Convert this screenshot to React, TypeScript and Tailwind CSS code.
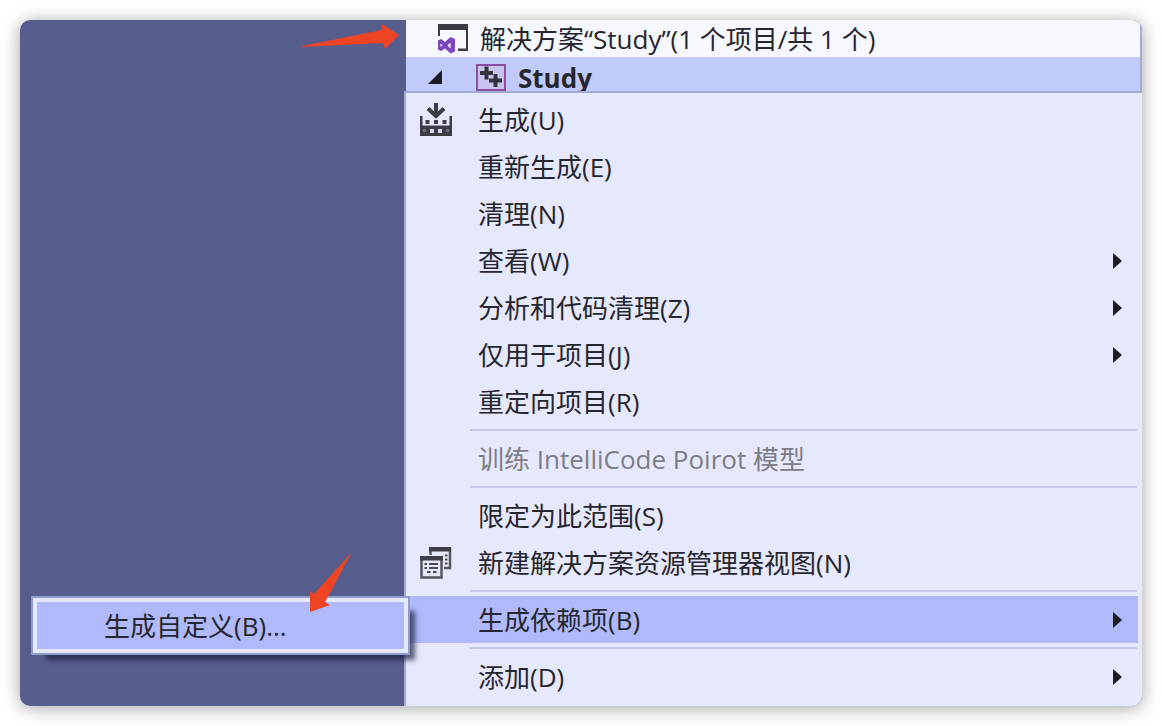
import React from "react";

type Item = {
  label: string;
  icon?: React.ReactNode;
  submenu?: boolean;
  disabled?: boolean;
  active?: boolean;
};

function BuildIcon() {
  return (
    <svg width="32" height="34" viewBox="0 0 32 34" aria-hidden="true">
      <path d="M16 0v13M8 5.500l8 7.500 8-7.500" fill="none" stroke="#3c3c44" strokeWidth="4" />
      <path d="M0 13h2.500v9.500h27V13H32v20H0z" fill="#3c3c44" />
      <path d="M5.500 17h4v4h-4zM14 17h4v4h-4zM22.500 17h4v4h-4z" fill="#3c3c44" />
      <path d="M10 26h4v4h-4zM18 26h4v4h-4z" fill="#d5d7ee" />
      <path d="M3 26h3v3H3zM26 26h3v3h-3z" fill="#6a6b78" />
    </svg>
  );
}

function ViewIcon() {
  return (
    <svg width="32" height="32" viewBox="0 0 32 32" aria-hidden="true">
      <path d="M10.500 8V1.500H30V21h-6" fill="none" stroke="#55555d" strokeWidth="2.500" />
      <path d="M9 0h22v4.500H9z" fill="#3f3f47" />
      <path d="M1.500 11h20v19.500h-20z" fill="#e6e8fd" stroke="#55555d" strokeWidth="2.500" />
      <path d="M0 9h23v4.500H0z" fill="#3f3f47" />
      <path
        d="M4.500 17h2.500M9 17h9M4.500 21h2.500M9 21h9M7 25h3.500M13 25h3.500M25 8.500h2.500M25 12.500h2.500M25 16.500h2.500"
        stroke="#4a4a52"
        strokeWidth="2"
      />
    </svg>
  );
}

function SolutionIcon() {
  return (
    <svg width="30" height="30" viewBox="0 0 30 30" aria-hidden="true">
      <path d="M0 0h30v27H20v-2.500h8V6H2v6H0z" fill="#3b3b43" />
      <path
        fillRule="evenodd"
        d="M12.500 13l4.500 2v12.500l-4.500 2L7 24.500 3 27l-3-1.500v-9L3 15l4 3zM12.500 18.500L9.500 21.500l3 3zM2.500 19.500v3.500l2-1.800z"
        fill="#7b45bd"
      />
    </svg>
  );
}

function ProjectIcon() {
  return (
    <svg width="30" height="27" viewBox="0 0 30 27" aria-hidden="true">
      <path d="M1 1h28v25H1z" fill="#c6c3ee" stroke="#8a4f9e" strokeWidth="2" />
      <path d="M4 9h13M10.500 2.500v13M13 16.500h13M19.500 10v13" stroke="#33333b" strokeWidth="4" />
    </svg>
  );
}

const groups: Item[][] = [
  [
    { label: "生成(U)", icon: <BuildIcon /> },
    { label: "重新生成(E)" },
    { label: "清理(N)" },
    { label: "查看(W)", submenu: true },
    { label: "分析和代码清理(Z)", submenu: true },
    { label: "仅用于项目(J)", submenu: true },
    { label: "重定向项目(R)" },
  ],
  [{ label: "训练 IntelliCode Poirot 模型", disabled: true }],
  [{ label: "限定为此范围(S)" }, { label: "新建解决方案资源管理器视图(N)", icon: <ViewIcon /> }],
  [{ label: "生成依赖项(B)", submenu: true, active: true }],
  [{ label: "添加(D)", submenu: true }],
];

function Submenu() {
  return (
    <div className="absolute right-full top-0 z-10 -mr-1 w-[379px] border-2 border-[#8f9bcb] bg-[#e6e8fd] p-1 shadow-[10px_10px_5px_-5px_rgba(25,28,60,0.7)]">
      <button
        type="button"
        role="menuitem"
        className="flex h-[47px] w-full items-center bg-[#afb9fc] pl-[67px] text-left"
      >
        生成自定义(B)...
      </button>
      <svg
        className="absolute -top-[46px] right-[55px]"
        width="44"
        height="60"
        viewBox="0 0 44 60"
        aria-hidden="true"
      >
        <path d="M43 0L16 50l5 3L1 60V39l4 3L24 21z" fill="#ee4423" />
      </svg>
    </div>
  );
}

function MenuRow({ item }: { item: Item }) {
  return (
    <li role="none" className="relative pr-1">
      <button
        type="button"
        role="menuitem"
        disabled={item.disabled}
        aria-haspopup={item.submenu ? "menu" : undefined}
        className={
          "flex h-[47px] w-full items-center pr-4 text-left " +
          (item.active ? "bg-[#afb9fc] " : "") +
          (item.disabled ? "text-[#7d7d88]" : "")
        }
      >
        <span className="flex w-[72px] shrink-0 pl-[14px]">{item.icon}</span>
        <span className="flex-1 whitespace-nowrap">{item.label}</span>
        {item.submenu && (
          <svg width="10" height="16" viewBox="0 0 10 16" aria-hidden="true">
            <path d="M1 0l9 8-9 8z" fill="#1c1c22" />
          </svg>
        )}
      </button>
      {item.active && <Submenu />}
    </li>
  );
}

export default function App() {
  return (
    <main className="bg-white p-5 font-['Open_Sans','Noto_Sans_CJK_SC',sans-serif] text-[26px] leading-none text-[#26262e]">
      <div className="rounded-[10px] shadow-[0_2px_18px_rgba(0,0,0,0.36)]">
        <div className="flex overflow-hidden rounded-[10px] bg-[#575d8c]">
          <aside className="relative w-[384px] shrink-0">
            <svg
              className="absolute right-[5px] top-[3px]"
              width="98"
              height="28"
              viewBox="0 0 98 28"
              aria-hidden="true"
            >
              <path d="M1 23L81 7V1l17 11-14 14-2-6L1 24z" fill="#ee4423" />
            </svg>
          </aside>
          <div className="min-w-0 flex-1">
            <header className="ml-[2px] border-r-2 border-[#a3abdb]">
              <div className="flex h-[37px] items-center gap-3 bg-[#f6f8fe] pl-8">
                <SolutionIcon />
                <span className="whitespace-nowrap">解决方案“Study”(1 个项目/共 1 个)</span>
              </div>
              <div className="flex h-[34px] items-end bg-[#c0cafb] pl-[22px]">
                <svg className="mb-[7px]" width="14" height="14" viewBox="0 0 14 14" aria-hidden="true">
                  <path d="M14 0v14H0z" fill="#1c1c22" />
                </svg>
                <span className="ml-[34px]">
                  <ProjectIcon />
                </span>
                <span className="ml-3 h-[26px] font-bold">Study</span>
              </div>
            </header>
            <nav className="relative border-l-2 border-t-2 border-[#a0a9d8] bg-[#e6e8fd] pb-[6px] pt-[3px]">
              <ul role="menu">
                {groups.map((group, index) => (
                  <React.Fragment key={group[0].label}>
                    {index > 0 && (
                      <li role="separator" className="my-1 ml-16 mr-[5px] h-[2px] bg-[#c5c8ea]" />
                    )}
                    {group.map((item) => (
                      <MenuRow key={item.label} item={item} />
                    ))}
                  </React.Fragment>
                ))}
              </ul>
            </nav>
          </div>
        </div>
      </div>
    </main>
  );
}
